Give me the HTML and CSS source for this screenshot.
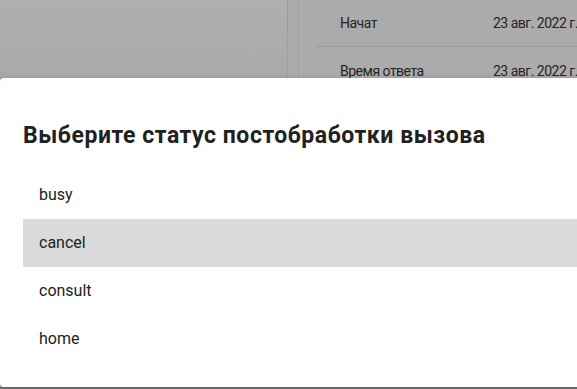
FILE: index.html
```html
<!DOCTYPE html>
<html lang="ru">
<head>
    <meta charset="UTF-8">
    <meta name="viewport" content="width=device-width, initial-scale=1.0">
    <title>Статус постобработки</title>
    <link rel="stylesheet" href="styles.css">
</head>
<body>

<div class="page">
    <div class="side"></div>
    <div class="strip"></div>
    <div class="details">
        <div class="row">
            <span class="label">Начат</span>
            <span class="value">23 авг. 2022 г., 14:32:10</span>
        </div>
        <div class="row">
            <span class="label">Время ответа</span>
            <span class="value">23 авг. 2022 г., 14:32:18</span>
        </div>
    </div>
</div>

<div class="dialog">
    <h2 class="dialog-title">Выберите статус постобработки вызова</h2>
    <ul class="options">
        <li class="option">busy</li>
        <li class="option active">cancel</li>
        <li class="option">consult</li>
        <li class="option">home</li>
    </ul>
</div>

</body>
</html>
```

FILE: styles.css
```css
    body {
        margin: 0;
        height: 389px;
        overflow: hidden;
        font-family: Roboto, "Liberation Sans", sans-serif;
        background-color: #7b7b7b;
        color: #222;
    }

    .page {
        display: flex;
        height: 387px;
        background-color: #ababab;
    }

    .side {
        width: 287px;
        border-right: 1px solid #9e9e9e;
        background: linear-gradient(#afafaf, #ababab 60px, #a7a7a7 80px, #ababab);
    }

    .strip {
        width: 10px;
        border-right: 1px solid #a0a0a0;
    }

    .details {
        flex: 1;
        min-width: 0;
        margin-top: -1px;
        padding-left: 17px;
        overflow: hidden;
    }

    .row {
        display: flex;
        align-items: center;
        height: 47px;
        padding-left: 24px;
        border-bottom: 1px solid #999;
        font-size: 14px;
        letter-spacing: -0.5px;
        white-space: nowrap;
        color: #242424;
    }

    .label {
        width: 153px;
        flex-shrink: 0;
    }

    .value {
        flex-shrink: 0;
    }

    .dialog {
        position: absolute;
        top: 78px;
        left: 0;
        width: 620px;
        height: 309px;
        box-sizing: border-box;
        padding: 42px 0 0 23px;
        background-color: #fff;
        border-radius: 4px;
        box-shadow: 0 2px 6px rgba(0, 0, 0, 0.25);
    }

    .dialog-title {
        margin: 0;
        font-size: 23px;
        line-height: 32px;
        letter-spacing: 0.55px;
        font-weight: bold;
        color: #212121;
        white-space: nowrap;
    }

    .options {
        list-style: none;
        margin: 19px 0 0;
        padding: 0;
    }

    .option {
        height: 48px;
        line-height: 48px;
        padding-left: 16px;
        font-size: 16px;
        color: #212121;
    }

    .option.active {
        background-color: #dadada;
    }
```
